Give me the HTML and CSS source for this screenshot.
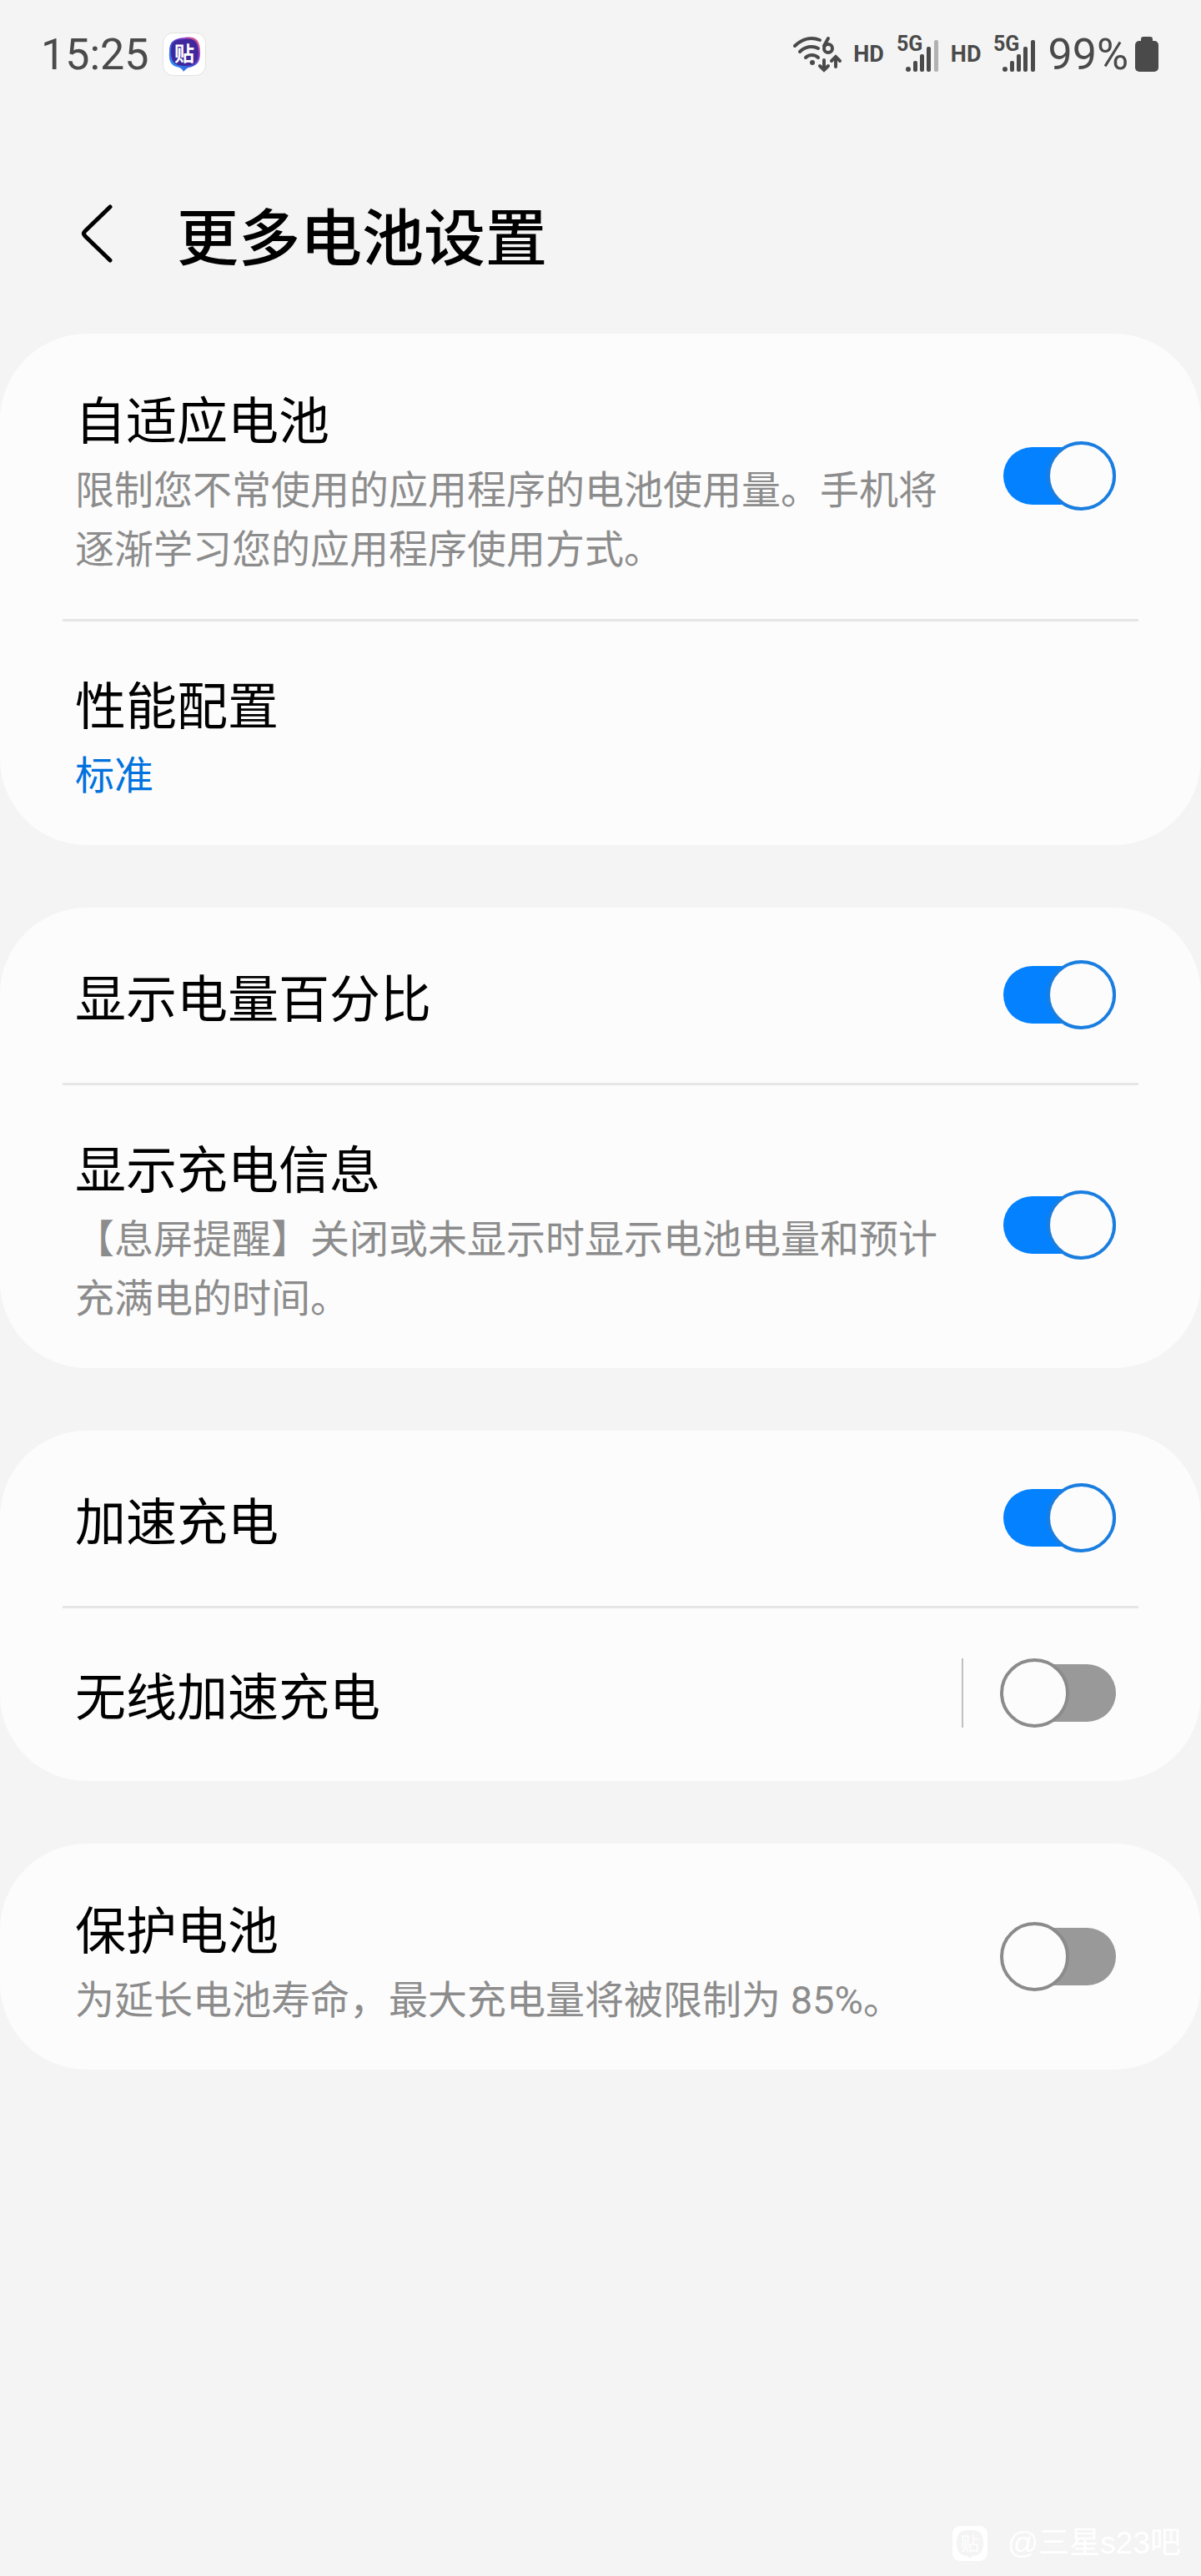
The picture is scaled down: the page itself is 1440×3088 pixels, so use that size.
FILE: index.html
```
<!DOCTYPE html>
<html lang="zh-CN">
<head>
    <meta charset="UTF-8">
    <meta name="viewport" content="width=device-width, initial-scale=1.0">
    <title>更多电池设置</title>
    <link rel="stylesheet" href="styles.css">
</head>
<body>
    <div class="status-bar">
        <span class="time">15:25</span>
        <svg class="app-icon" viewBox="0 0 52 52" width="52" height="52">
            <defs>
                <linearGradient id="bubble" x1="0" y1="1" x2="1" y2="0">
                    <stop offset="0" stop-color="#2aa8ff"/>
                    <stop offset="0.45" stop-color="#3a50d8"/>
                    <stop offset="0.7" stop-color="#8a3fd0"/>
                    <stop offset="1" stop-color="#ff6a70"/>
                </linearGradient>
            </defs>
            <rect x="0.5" y="0.5" width="51" height="51" rx="12" fill="#fff" stroke="#dfe3df"/>
            <path d="M26 6C40 4 45 9 45 24C45 36 41 40 31 42C28 43 27 45 25 47C24 45 23 43 20 42C10 40 7 35 8 23C8 11 13 7 26 6Z" fill="url(#bubble)"/>
            <path d="M26 8C38 6 43 11 43 24C43 36 38 40 26 40C14 40 10 35 10 23C10 12 14 8 26 8Z" fill="#40289c"/>
            <text x="26" y="34" text-anchor="middle" class="app-glyph">贴</text>
        </svg>
        <div class="status-icons">
            <svg viewBox="0 0 58 46" width="58" height="46" fill="none" stroke="#4a4a4a" stroke-width="4" stroke-linecap="round">
                <path d="M3 13C12 4 23 2 33 6"/>
                <path d="M9 20C15 14 24 12 31 16"/>
                <path d="M16 27C20 23 27 23 31 27"/>
                <circle cx="24" cy="33" r="3" fill="#4a4a4a" stroke="none"/>
                <path d="M43 4L38 13"/>
                <circle cx="43" cy="16" r="5"/>
                <path d="M38 30V42M33 37L38 42L43 37"/>
                <path d="M52 38V26M47 31L52 26L57 31"/>
            </svg>
            <span class="hd">HD</span>
            <svg class="signal" viewBox="0 0 50 46" width="50" height="46" fill="#4a4a4a">
                <text x="0" y="19">5G</text>
                <circle cx="14" cy="41" r="3"/>
                <rect x="20" y="31" width="5" height="13" rx="2"/>
                <rect x="28" y="23" width="5" height="21" rx="2"/>
                <rect x="36" y="14" width="5" height="30" rx="2"/>
                <rect x="45" y="6" width="5" height="38" rx="2" fill="#b2b2b2"/>
            </svg>
            <span class="hd">HD</span>
            <svg class="signal" viewBox="0 0 50 46" width="50" height="46" fill="#4a4a4a">
                <text x="0" y="19">5G</text>
                <circle cx="14" cy="41" r="3"/>
                <rect x="20" y="31" width="5" height="13" rx="2"/>
                <rect x="28" y="23" width="5" height="21" rx="2"/>
                <rect x="36" y="14" width="5" height="30" rx="2"/>
                <rect x="45" y="6" width="5" height="38" rx="2"/>
            </svg>
            <div class="battery">
                <span>99%</span>
                <svg viewBox="0 0 28 42" width="28" height="42" fill="#4a4a4a">
                    <rect x="7" y="0" width="14" height="12" rx="3"/>
                    <rect x="0" y="5" width="28" height="37" rx="5"/>
                </svg>
            </div>
        </div>
    </div>

    <header class="header">
        <button type="button" class="back-btn" aria-label="返回">
            <svg viewBox="0 0 40 70" width="40" height="70" fill="none" stroke="#000" stroke-width="5" stroke-linecap="round" stroke-linejoin="round">
                <path d="M36 3L6 32Q3 35 6 38L36 67"/>
            </svg>
        </button>
        <h1>更多电池设置</h1>
    </header>

    <main class="settings">
        <section class="card">
            <label class="row">
                <span class="row-text">
                    <span class="row-title">自适应电池</span>
                    <span class="row-desc">限制您不常使用的应用程序的电池使用量。手机将逐渐学习您的应用程序使用方式。</span>
                </span>
                <input type="checkbox" class="switch" checked>
            </label>
            <a class="row" href="#">
                <span class="row-text">
                    <span class="row-title">性能配置</span>
                    <span class="row-desc row-value">标准</span>
                </span>
            </a>
        </section>

        <section class="card">
            <label class="row">
                <span class="row-text">
                    <span class="row-title">显示电量百分比</span>
                </span>
                <input type="checkbox" class="switch" checked>
            </label>
            <label class="row">
                <span class="row-text">
                    <span class="row-title">显示充电信息</span>
                    <span class="row-desc">【息屏提醒】关闭或未显示时显示电池电量和预计充满电的时间。</span>
                </span>
                <input type="checkbox" class="switch" checked>
            </label>
        </section>

        <section class="card">
            <label class="row">
                <span class="row-text">
                    <span class="row-title">加速充电</span>
                </span>
                <input type="checkbox" class="switch" checked>
            </label>
            <label class="row">
                <span class="row-text">
                    <span class="row-title">无线加速充电</span>
                </span>
                <span class="switch-divider"></span>
                <input type="checkbox" class="switch">
            </label>
        </section>

        <section class="card">
            <label class="row">
                <span class="row-text">
                    <span class="row-title">保护电池</span>
                    <span class="row-desc">为延长电池寿命，最大充电量将被限制为 85%。</span>
                </span>
                <input type="checkbox" class="switch">
            </label>
        </section>
    </main>

    <footer class="watermark">
        <svg viewBox="0 0 42 42" width="42" height="42">
            <rect x="0" y="0" width="42" height="42" rx="9" fill="#fff"/>
            <path d="M21 5C33 5 37 9 37 20C37 31 33 35 24 36L21 39L18 36C9 35 5 31 5 20C5 9 9 5 21 5Z" fill="#f4f4f4"/>
            <text x="21" y="29" text-anchor="middle" class="watermark-glyph">贴</text>
        </svg>
        <span>@三星s23吧</span>
    </footer>
</body>
</html>
```
FILE: styles.css
```
* {
    box-sizing: border-box;
}

body {
    display: flex;
    flex-direction: column;
    min-height: 100vh;
    margin: 0;
    background-color: #f4f4f4;
    color: #000;
    font-family: Roboto, "Noto Sans CJK SC", sans-serif;
}

svg {
    display: block;
    flex-shrink: 0;
    overflow: visible;
}

/* status bar */
.status-bar {
    display: flex;
    align-items: center;
    gap: 16px;
    height: 130px;
    padding: 0 51px 0 49px;
    color: #4a4a4a;
    font-size: 52px;
}

.app-glyph {
    fill: #fff;
    font-size: 24px;
    font-weight: bold;
}

.status-icons {
    display: flex;
    align-items: center;
    gap: 15px;
    margin-left: auto;
}

.hd {
    font-size: 27px;
    font-weight: 700;
}

.signal text {
    font-size: 25px;
    font-weight: 700;
}

.battery {
    display: flex;
    align-items: center;
    gap: 8px;
}

/* header */
.header {
    display: flex;
    align-items: center;
    gap: 76px;
    height: 270px;
    padding: 30px 96px 0;
}

.header h1 {
    margin: 14px 0 0;
    font-size: 74px;
    font-weight: 500;
    line-height: 100px;
}

.back-btn {
    padding: 0;
    border: none;
    background: none;
    cursor: pointer;
}

/* cards */
.settings {
    display: flex;
    flex-direction: column;
    gap: 75px;
}

.card {
    padding: 3px 75px 0;
    background-color: #fcfcfc;
    border-radius: 104px;
}

.row {
    display: flex;
    align-items: center;
    gap: 44px;
    min-height: 207px;
    padding: 0 27px 0 15px;
    color: inherit;
    text-decoration: none;
    cursor: pointer;
}

.row + .row {
    border-top: 3px solid #e6e6e6;
    min-height: 210px;
}

.row-text {
    flex: 1;
    padding: 58px 0 48px;
}

.row-title {
    display: block;
    font-size: 61px;
    line-height: 91px;
}

.row-desc {
    display: block;
    color: #8c8c8c;
    font-size: 47px;
    line-height: 71px;
}

.row-value {
    color: #0072de;
}

/* switch */
.switch {
    appearance: none;
    display: grid;
    align-items: center;
    flex-shrink: 0;
    width: 139px;
    height: 83px;
    margin: 0 0 4px;
    cursor: pointer;
}

.switch::before,
.switch::after {
    content: "";
    grid-area: 1 / 1;
}

.switch::before {
    justify-self: end;
    width: 135px;
    height: 69px;
    border-radius: 35px;
    background-color: #999;
}

.switch::after {
    justify-self: start;
    width: 83px;
    height: 83px;
    box-sizing: border-box;
    border: 4px solid #8b8b8b;
    border-radius: 50%;
    background-color: #fcfcfc;
}

.switch:checked::before {
    background-color: #0381fe;
}

.switch:checked::after {
    justify-self: end;
    border-color: #1a7ee0;
}

.switch-divider {
    width: 2px;
    height: 83px;
    margin-bottom: 4px;
    background-color: #c0c0c0;
}

/* watermark */
.watermark {
    display: flex;
    align-items: center;
    justify-content: flex-end;
    gap: 24px;
    margin-top: auto;
    padding: 0 24px 14px;
    color: #fff;
    font-family: "Liberation Sans", "Noto Sans CJK SC", sans-serif;
    font-size: 37px;
    line-height: 50px;
}

.watermark-glyph {
    fill: #fff;
    font-size: 22px;
}
```
